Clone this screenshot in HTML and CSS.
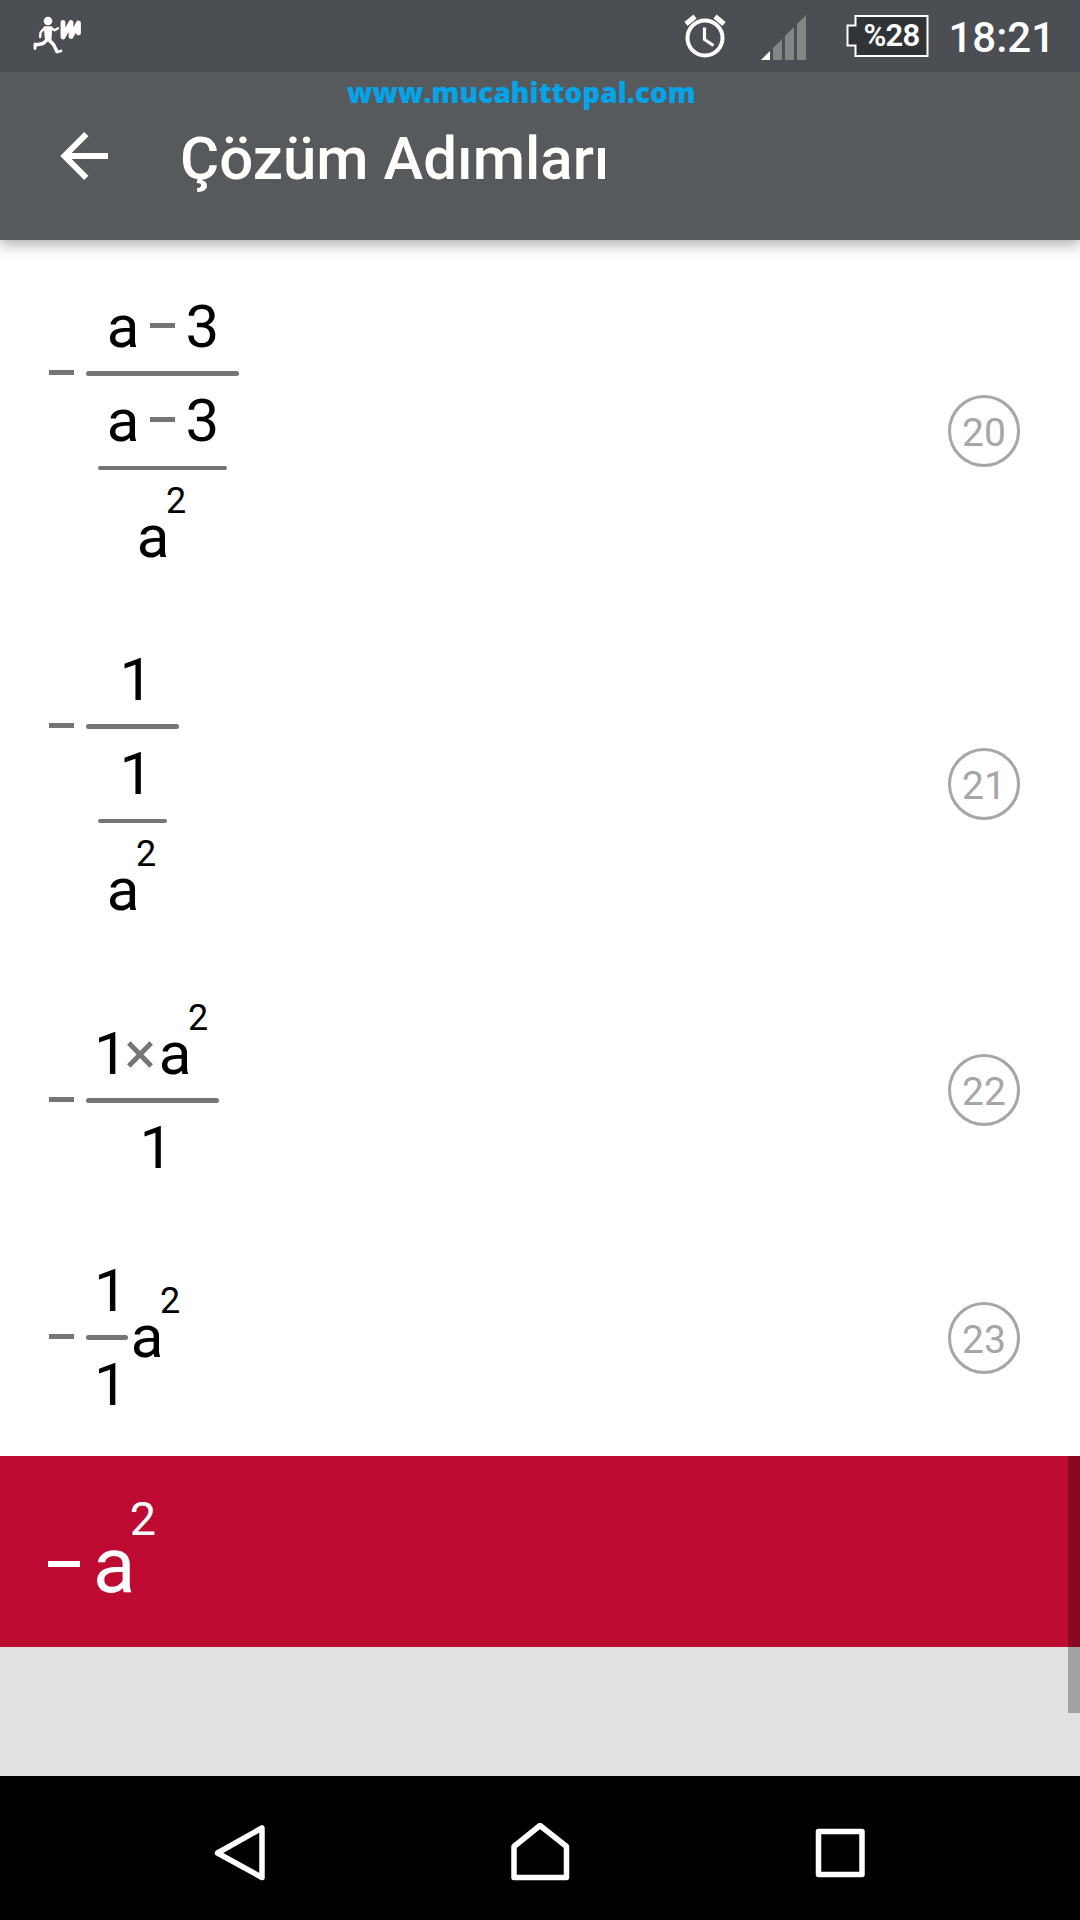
FILE: index.html
```html
<!DOCTYPE html>
<html lang="tr">
<head>
    <meta charset="UTF-8">
    <meta name="viewport" content="width=device-width, initial-scale=1.0">
    <title>Çözüm Adımları</title>
    <link rel="stylesheet" href="styles.css">
</head>
<body>
    <div class="status-bar">
        <svg class="icon-runner" width="50" height="40" viewBox="0 0 50 40" fill="none" stroke="#fff" stroke-linecap="round" stroke-linejoin="round">
            <circle cx="16" cy="6" r="4.300" fill="#fff" stroke="none"/>
            <path d="M12.500 12h7l-.8 13h-5z" fill="#fff" stroke-width="1.500"/>
            <path d="M12.500 13l-4 4.500-.3 4.500M19 13l3.500 2.300 3.500-2" stroke-width="2.400"/>
            <path d="M15 25l-4 3.500-7.500 1.500" stroke-width="3.500"/>
            <path d="M3 29v4.500" stroke-width="2.800"/>
            <path d="M17 25l4.500 4.500 3.500 7" stroke-width="3.500"/>
            <path d="M25 37l4-1" stroke-width="2.800"/>
            <path d="M31 7.500v14.500L39 7.500v14L46.500 8v10" stroke-width="4.800"/>
        </svg>
        <div class="status-right">
            <svg class="icon-alarm" width="44" height="46" viewBox="0 0 44 46" fill="none" stroke="#fff">
                <circle cx="22" cy="25" r="17.500" stroke-width="4"/>
                <path d="M21.500 14.500v12l9 6" stroke-width="3.200"/>
                <path d="M3 11l9-7.500M41 11l-9-7.500" stroke-width="5"/>
            </svg>
            <svg class="icon-signal" width="46" height="45" viewBox="0 0 46 45">
                <path d="M0 45l9-9v9z" fill="#fff"/>
                <path d="M12 33l9-9v21h-9zM24 21l9-9v33h-9zM36 9l9-9v45h-9z" fill="#838687"/>
            </svg>
            <div class="battery">
                <svg width="83" height="42" viewBox="0 0 83 42">
                    <path d="M9.500 1h72v40h-72V30.500H1.500v-20h8z" fill="#303436" stroke="#fff" stroke-width="2"/>
                </svg>
                <span class="battery-text">%28</span>
            </div>
            <span class="clock">18:21</span>
        </div>
    </div>

    <div class="toolbar">
        <svg class="icon-back" width="48" height="48" viewBox="0 0 48 48" fill="none" stroke="#fff" stroke-width="6">
            <path d="M26.300 2.200L4.500 24l21.800 21.800M4.500 24H48"/>
        </svg>
        <h1>Çözüm Adımları</h1>
        <span class="watermark">www.mucahittopal.com</span>
    </div>

    <div class="steps">
        <div class="step step-tall">
            <div class="math">
                <i class="minus sign"></i>
                <div class="frac">
                    <div class="row"><span class="a">a</span><i class="minus op"></i><span class="three">3</span></div>
                    <i class="bar"></i>
                    <div class="frac inner">
                        <div class="row"><span class="a">a</span><i class="minus op"></i><span class="three">3</span></div>
                        <i class="bar"></i>
                        <div class="row"><span class="a base">a</span><span class="sup">2</span></div>
                    </div>
                </div>
            </div>
            <div class="step-number">20</div>
        </div>

        <div class="step step-tall">
            <div class="math">
                <i class="minus sign"></i>
                <div class="frac">
                    <div class="row"><span class="one">1</span></div>
                    <i class="bar"></i>
                    <div class="frac inner">
                        <div class="row"><span class="one">1</span></div>
                        <i class="bar"></i>
                        <div class="row"><span class="a base">a</span><span class="sup">2</span></div>
                    </div>
                </div>
            </div>
            <div class="step-number">21</div>
        </div>

        <div class="step step-medium">
            <div class="math">
                <i class="minus sign sign-low"></i>
                <div class="frac">
                    <div class="row">
                        <span class="one base">1</span>
                        <svg class="times" width="26" height="27" viewBox="0 0 26 27" stroke="#757575" stroke-width="5">
                            <path d="M1.800 2l22.400 23M24.200 2L1.800 25"/>
                        </svg>
                        <span class="a base">a</span><span class="sup">2</span>
                    </div>
                    <i class="bar"></i>
                    <div class="row"><span class="one">1</span></div>
                </div>
            </div>
            <div class="step-number">22</div>
        </div>

        <div class="step step-short">
            <div class="math">
                <i class="minus sign"></i>
                <div class="frac">
                    <div class="row"><span class="one">1</span></div>
                    <i class="bar"></i>
                    <div class="row"><span class="one">1</span></div>
                </div>
                <div class="row factor"><span class="a base">a</span><span class="sup">2</span></div>
            </div>
            <div class="step-number">23</div>
        </div>
    </div>

    <div class="result">
        <div class="math">
            <i class="minus sign"></i>
            <div class="row"><span class="a base">a</span><span class="sup">2</span></div>
        </div>
        <div class="scrollbar"></div>
    </div>

    <div class="bottom-space"></div>

    <div class="nav-bar">
        <svg width="56" height="60" viewBox="0 0 56 60" fill="none" stroke="#fff" stroke-width="5.500" stroke-linejoin="round">
            <path d="M51 5v49.500L6.500 30z"/>
        </svg>
        <svg width="60" height="60" viewBox="0 0 60 60" fill="none" stroke="#fff" stroke-width="5.500" stroke-linejoin="round">
            <path d="M3 54.500v-31L29 2.500l26.500 21v31z"/>
        </svg>
        <svg width="50" height="50" viewBox="0 0 50 50" fill="none" stroke="#fff" stroke-width="5.500" stroke-linejoin="round">
            <path d="M3.500 3.500h43.500v43H3.500z"/>
        </svg>
    </div>
</body>
</html>
```

FILE: styles.css
```css
* {
    box-sizing: border-box;
}

body {
    margin: 0;
    width: 1080px;
    height: 1920px;
    overflow: hidden;
    background-color: #fff;
    font-family: Roboto, sans-serif;
    color: #000;
}

svg {
    display: block;
    flex: none;
}

/* status bar */
.status-bar {
    position: relative;
    z-index: 1;
    display: flex;
    justify-content: space-between;
    height: 72px;
    padding: 15px 25px 0 32px;
    background-color: #4b4e53;
    color: #fff;
}

.status-right {
    display: flex;
    align-items: flex-start;
}

.icon-alarm {
    margin: -2px 34px 0 0;
}

.icon-signal {
    margin-right: 39px;
}

.battery {
    position: relative;
    margin-right: 19px;
}

.battery-text {
    position: absolute;
    left: 17px;
    top: 0;
    font-size: 31px;
    font-weight: 600;
    line-height: 41px;
    letter-spacing: -0.7px;
}

.clock {
    margin-top: 1px;
    font-size: 42px;
    font-weight: 500;
    line-height: 44px;
}

/* toolbar */
.toolbar {
    position: relative;
    display: flex;
    align-items: center;
    height: 168px;
    padding: 0 60px;
    background-color: #565a5d;
    box-shadow: 0 4px 14px rgba(0, 0, 0, 0.35);
    color: #fff;
}

.toolbar h1 {
    margin: 6px 0 0 72px;
    font-size: 60px;
    font-weight: 500;
    line-height: 70px;
}

.watermark {
    position: absolute;
    left: 347px;
    top: 2px;
    font-family: "Open Sans", sans-serif;
    font-size: 28px;
    font-weight: 800;
    line-height: 36px;
    color: #05a3e8;
}

/* steps */
.steps {
    padding-top: 14px;
}

.step {
    display: flex;
    justify-content: space-between;
    align-items: center;
    padding: 0 60px 0 49px;
}

.step-tall {
    height: 353px;
}

.step-tall .math {
    margin-top: 2px;
}

.step-medium {
    height: 260px;
}

.step-short {
    height: 236px;
}

.step-short .math {
    margin-bottom: 2px;
}

.step-number {
    width: 72px;
    height: 72px;
    border: 3px solid #a6a6a6;
    border-radius: 50%;
    font-size: 39px;
    line-height: 70px;
    text-align: center;
    color: #a6a6a6;
}

.math {
    display: flex;
    align-items: flex-start;
    font-size: 60px;
    line-height: 71px;
}

.row {
    display: flex;
    align-items: flex-start;
}

.frac {
    display: flex;
    flex-direction: column;
    align-items: center;
}

.frac > .row {
    padding: 0 12px;
}

.inner {
    margin: 0 12px;
}

.bar {
    align-self: stretch;
    height: 5px;
    margin: 9px 0;
    border-radius: 3px;
    background-color: #757575;
}

.inner .bar {
    height: 4px;
    margin: 10px 0;
}

/* characters are as wide as their ink */
.a {
    width: 0.45em;
    text-indent: -0.053em;
}

.one {
    width: 0.3em;
    text-indent: -0.065em;
}

.three {
    width: 27px;
    text-indent: -0.044em;
}

.base {
    margin-top: 0.35em;
}

.sup {
    width: 0.5em;
    font-size: 0.6em;
    line-height: 43px;
    text-indent: -0.03em;
}

.minus {
    width: 25px;
    height: 5px;
    background-color: #757575;
}

.sign {
    margin: 79px 12px 0 0;
}

.sign-low {
    margin-top: 100px;
}

.op {
    margin: 32px 13px 0;
}

.times {
    margin: 44px 9px 0 11px;
}

.factor {
    margin: 25px 0 0 6px;
}

/* result */
.result {
    position: relative;
    height: 191px;
    padding: 36px 48px 0;
    background-color: #be0b31;
    color: #fff;
}

.result .math {
    font-size: 78px;
    line-height: 94px;
}

.result .sign {
    width: 32px;
    height: 6px;
    margin: 69px 17px 0 0;
    background-color: #fff;
}

.result .sup {
    margin-left: -1px;
    line-height: 55px;
}

.scrollbar {
    position: absolute;
    top: 0;
    right: 0;
    width: 12px;
    height: 257px;
    background-color: rgba(0, 0, 0, 0.28);
}

.bottom-space {
    height: 129px;
    background-color: #e1e1e1;
}

.nav-bar {
    display: flex;
    justify-content: space-between;
    align-items: center;
    height: 144px;
    padding: 9px 215px 0 211px;
    background-color: #000;
}
```
